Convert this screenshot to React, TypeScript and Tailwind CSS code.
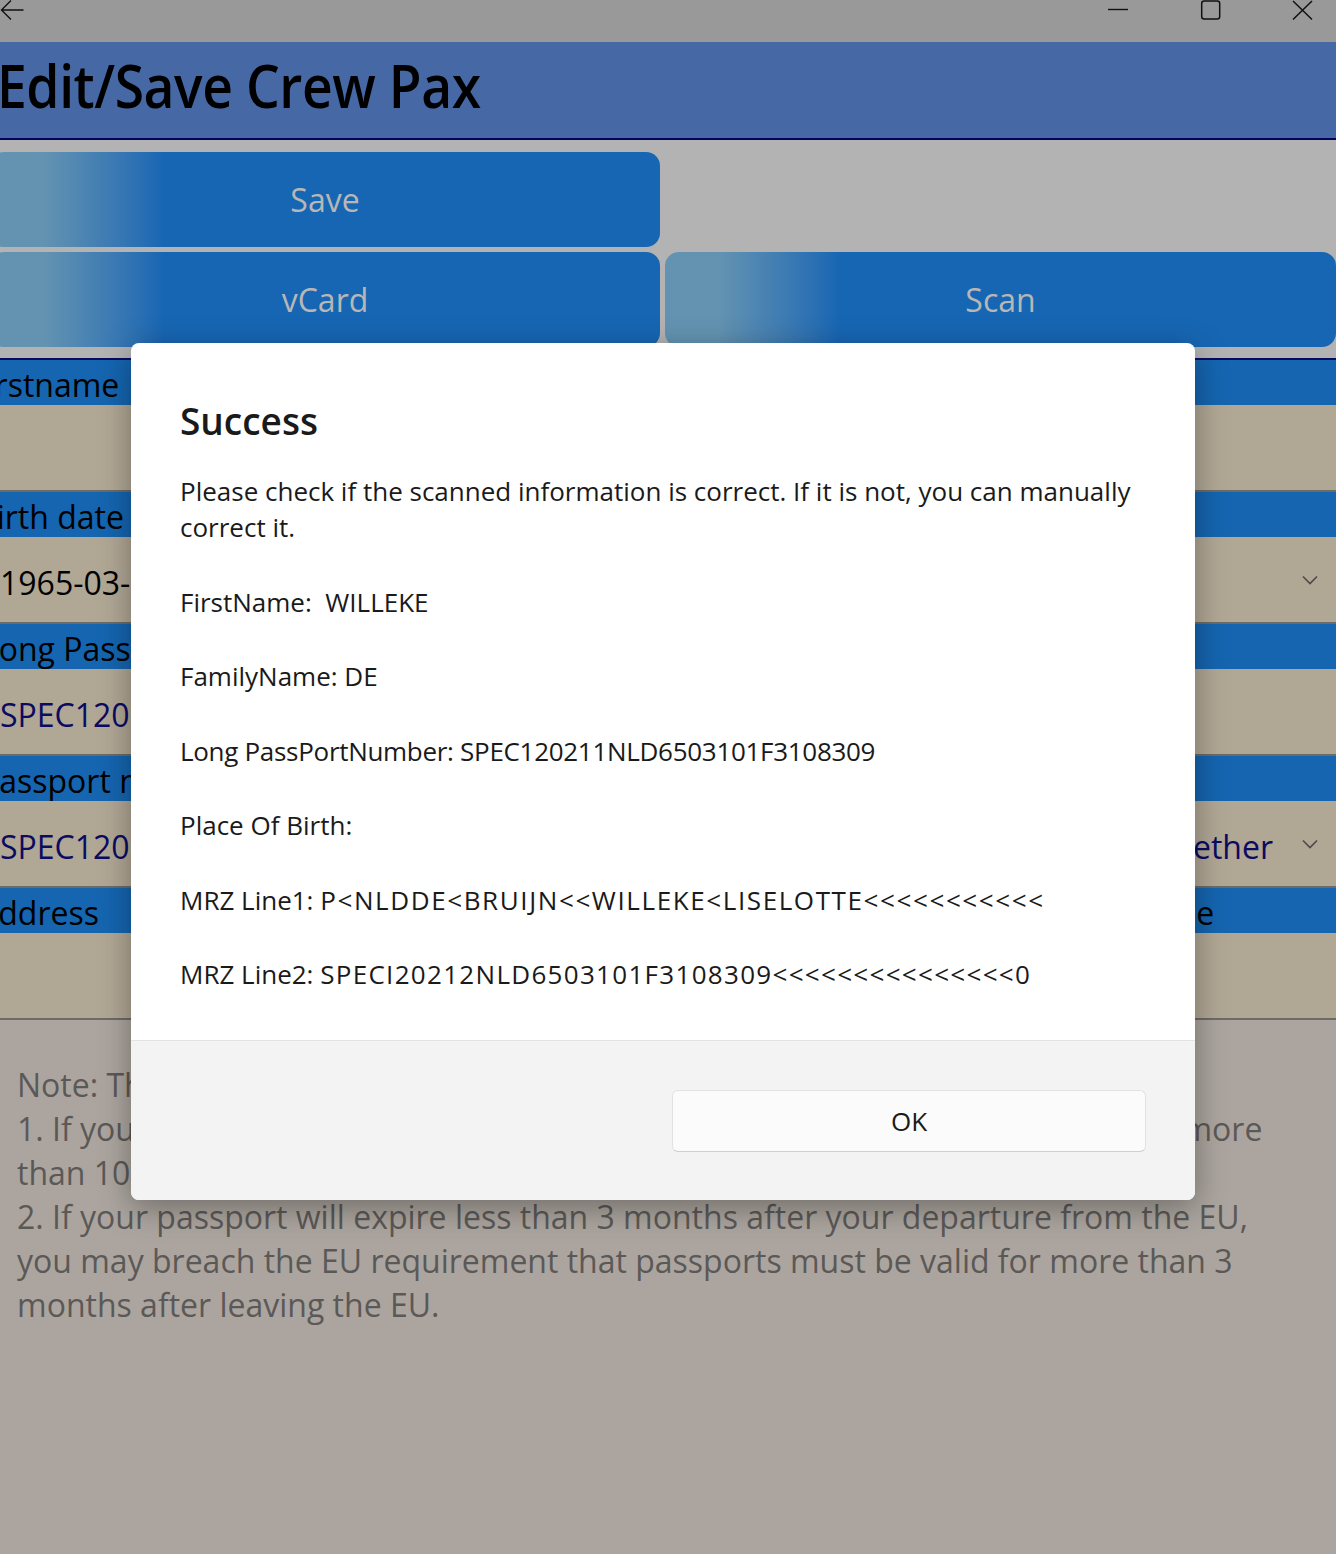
import React from "react";

function Chevron() {
  return (
    <svg width="16" height="10" viewBox="0 0 16 10" className="shrink-0">
      <path d="M1 1.5 L8 8.5 L15 1.5" fill="none" stroke="#4d4b48" strokeWidth="1.6" />
    </svg>
  );
}

function LabelRow({ left, right, shift }: { left: string; right?: string; shift: string }) {
  return (
    <div className="h-[45px] pt-[5px] bg-[#1565b0] grid grid-cols-[1146px_1fr] items-center overflow-hidden text-[32px] leading-none text-black">
      <div className={`${shift} whitespace-nowrap`}>{left}</div>
      <div className="whitespace-nowrap ml-[-3px]">{right ?? ""}</div>
    </div>
  );
}

function ValueRow({
  value,
  navy,
  combo,
  comboText,
}: {
  value?: string;
  navy?: boolean;
  combo?: boolean;
  comboText?: string;
}) {
  return (
    <div className="h-[87px] pt-[6px] bg-[#b1a795] border-b-2 border-[#6e6a64] flex items-center text-[32px] leading-none overflow-hidden">
      <div className={`flex-1 whitespace-nowrap ${navy ? "text-[#0b0b62]" : "text-black"}`}>{value ?? ""}</div>
      {combo && (
        <div className="flex items-center w-[190px] text-[#0b0b62] whitespace-nowrap">
          <span className="w-[127px] overflow-hidden flex justify-end">{comboText ?? ""}</span>
          <span className="ml-auto mr-[18px] mt-[-6px]">
            <Chevron />
          </span>
        </div>
      )}
    </div>
  );
}

export default function App() {
  const btn =
    "rounded-[14px] bg-linear-to-r from-[#6393b1] from-[8%] to-[#1766b3] to-[26%] flex items-center justify-center text-[32px] text-[#b7b7b7] leading-none";
  return (
    <div className="relative w-[1336px] h-[1554px] overflow-hidden bg-[#aca59f] font-['Open_Sans',sans-serif]">
      {/* title bar */}
      <div className="h-[42px] bg-[#999999] flex justify-between">
        <svg width="26" height="22" viewBox="0 0 26 22">
          <path d="M23.5 10 H1.5 M11 0.5 L1.5 10 L11 19.5" fill="none" stroke="#111" strokeWidth="1.4" />
        </svg>
        <div className="flex items-start">
          <svg width="22" height="20" viewBox="0 0 22 20" className="mr-[71px]">
            <path d="M1 9.5 H21" stroke="#111" strokeWidth="1.4" />
          </svg>
          <svg width="22" height="21" viewBox="0 0 22 21" className="mr-[70px]">
            <rect x="1.7" y="1" width="18" height="18" rx="2.5" fill="none" stroke="#111" strokeWidth="1.5" />
          </svg>
          <svg width="22" height="21" viewBox="0 0 22 21" className="mr-[22px]">
            <path d="M1 1 L20 19.5 M20 1 L1 19.5" stroke="#111" strokeWidth="1.5" />
          </svg>
        </div>
      </div>

      {/* header */}
      <div className="h-[98px] bg-[#4669a5] border-b-2 border-[#03035e] flex items-center">
        <h1 className="text-[60px] font-semibold tracking-[-0.5px] leading-none text-black ml-[-3px] mt-[-10px] scale-x-[0.89] origin-left whitespace-nowrap">
          Edit/Save Crew Pax
        </h1>
      </div>

      {/* buttons */}
      <div className="bg-[#b3b3b3] grid grid-cols-[660px_1fr] gap-[5px] pt-[12px] pb-[11px] border-b-2 border-[#0a0a5e]">
        <div className={`${btn} h-[95px] ml-[-10px]`}>Save</div>
        <div />
        <div className={`${btn} h-[95px] ml-[-10px]`}>vCard</div>
        <div className={`${btn} h-[95px]`}>Scan</div>
      </div>

      {/* form */}
      <div className="flex flex-col">
        <LabelRow left="Firstname" shift="ml-[-30px]" />
        <ValueRow />
        <LabelRow left="Birth date" shift="ml-[-24px]" />
        <ValueRow value="1965-03-10" combo />
        <LabelRow left="Long Passport number" shift="ml-[-18px]" />
        <ValueRow value="SPEC120211NLD6503101F3108309" navy />
        <LabelRow left="Passport number" shift="ml-[-20px]" />
        <ValueRow value="SPEC120211" navy combo comboText="Together" />
        <LabelRow left="Address" shift="ml-[-22px]" right="Type" />
        <ValueRow />
      </div>

      {/* notes */}
      <div className="pt-[43px] pl-[17px] text-[32px] leading-[44px] text-[#5b5957] whitespace-nowrap">
        <div>Note: There are two checks on the validity of passports:</div>
        <div>1. If your passport was issued long ago, you may breach the rules that it is not more</div>
        <div>than 10 years old on the day that you enter the EU.</div>
        <div>2. If your passport will expire less than 3 months after your departure from the EU,</div>
        <div>you may breach the EU requirement that passports must be valid for more than 3</div>
        <div>months after leaving the EU.</div>
      </div>

      {/* dialog */}
      <div className="absolute left-[131px] top-[343px] w-[1064px] h-[857px] rounded-[8px] bg-white overflow-hidden flex flex-col shadow-[0_8px_32px_rgba(0,0,0,0.35)]">
        <div className="flex-1 px-[49px] pt-[56px] text-[#1a1a1a]">
          <div className="text-[37px] font-semibold leading-[44px]">Success</div>
          <div className="mt-[30px] flex flex-col gap-[38.5px] text-[26px] leading-[36px]">
            <div>
              Please check if the scanned information is correct. If it is not, you can manually correct it.
            </div>
            <div className="whitespace-pre">FirstName:  WILLEKE</div>
            <div>FamilyName: DE</div>
            <div className="tracking-[-0.3px]">Long PassPortNumber: SPEC120211NLD6503101F3108309</div>
            <div>Place Of Birth:</div>
            <div className="whitespace-nowrap">
              MRZ Line1: <span className="tracking-[1.6px]">P&lt;NLDDE&lt;BRUIJN&lt;&lt;WILLEKE&lt;LISELOTTE&lt;&lt;&lt;&lt;&lt;&lt;&lt;&lt;&lt;&lt;&lt;</span>
            </div>
            <div className="whitespace-nowrap">
              MRZ Line2: <span className="tracking-[1.3px]">SPECI20212NLD6503101F3108309&lt;&lt;&lt;&lt;&lt;&lt;&lt;&lt;&lt;&lt;&lt;&lt;&lt;&lt;&lt;0</span>
            </div>
          </div>
        </div>
        <div className="h-[160px] shrink-0 bg-[#f3f3f3] border-t border-[#e3e3e3] grid grid-cols-2 gap-[18px] px-[49px] pt-[49px]">
          <div />
          <div className="h-[62px] rounded-[6px] bg-[#fbfbfb] border border-[#e2e2e2] border-b-[#cfcfcf] flex items-center justify-center text-[26px] text-[#1a1a1a]">
            OK
          </div>
        </div>
      </div>
    </div>
  );
}
